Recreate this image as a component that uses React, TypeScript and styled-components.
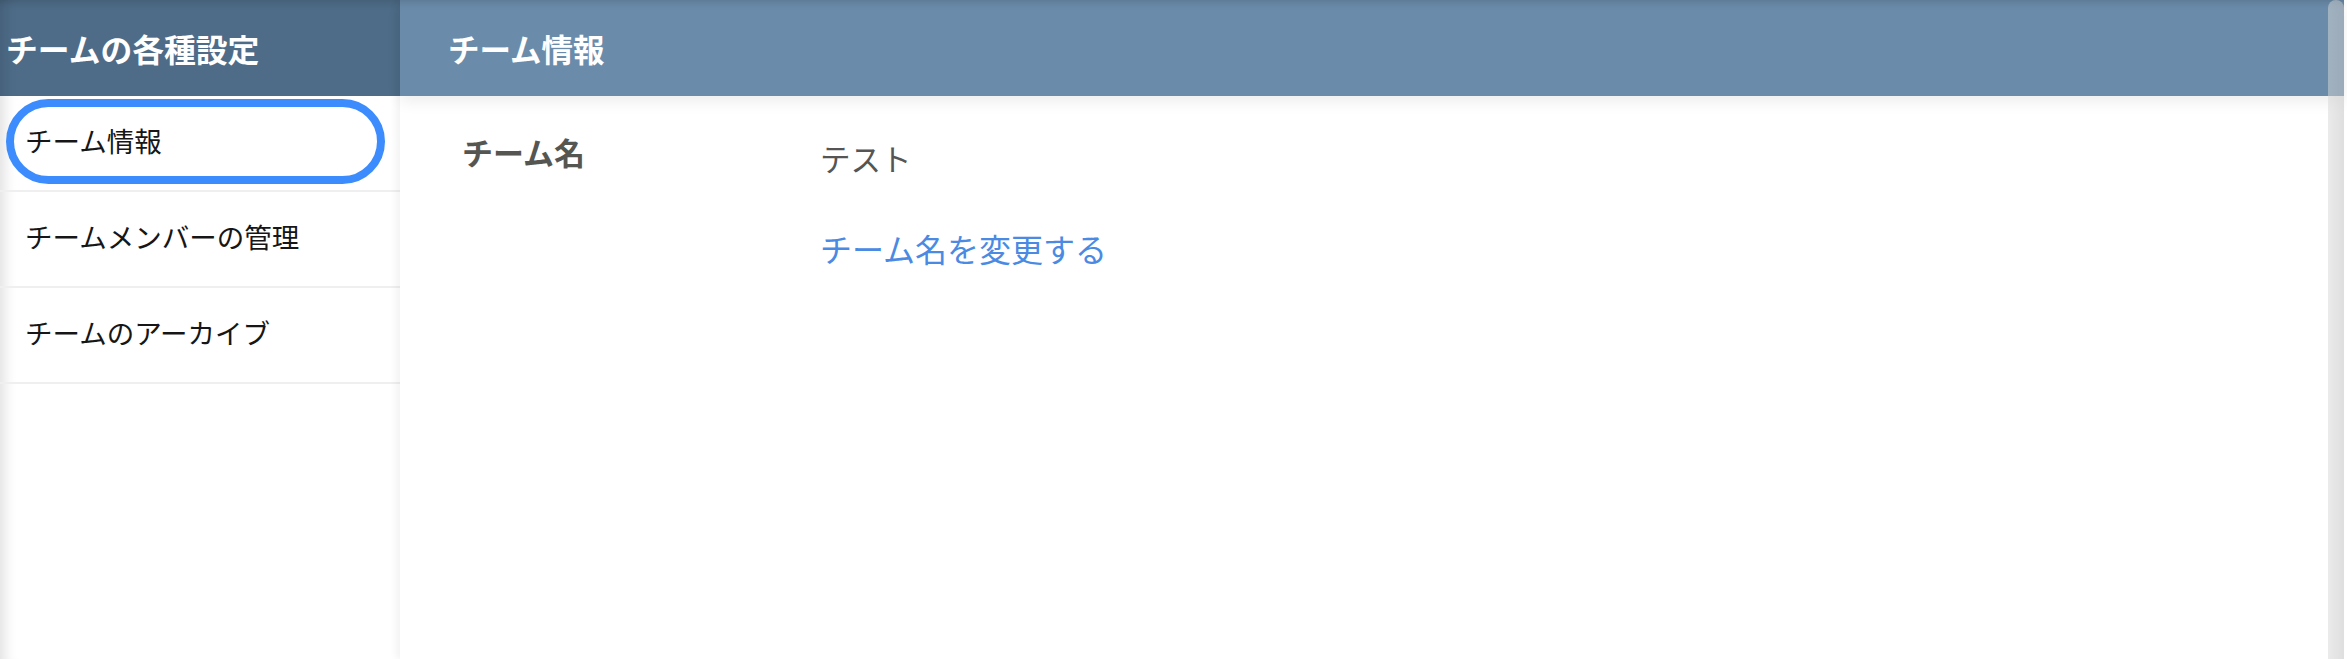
import React from "react";
import styled, { createGlobalStyle } from "styled-components";

const GlobalStyle = createGlobalStyle`
  html, body {
    margin: 0;
    padding: 0;
    background: #ffffff;
  }
  body {
    font-family: "Noto Sans CJK JP", "Noto Sans", sans-serif;
    -webkit-font-smoothing: antialiased;
  }
  * { box-sizing: border-box; }
`;

const Page = styled.div`
  position: relative;
  display: flex;
  height: 659px;
  padding-right: 3px;
  background: #ffffff;
  overflow: hidden;
`;

const Sidebar = styled.aside`
  width: 400px;
  flex: none;
  display: flex;
  flex-direction: column;
  background: #ffffff;
  box-shadow: inset 16px 0 14px -12px rgba(0, 0, 0, 0.13);
`;

const SidebarHeader = styled.div`
  height: 96px;
  flex: none;
  display: flex;
  align-items: center;
  padding-left: 6px;
  background: #4e6c88;
  color: #ffffff;
  font-size: 31.8px;
  font-weight: 700;
  box-shadow: inset 0 10px 8px -8px rgba(0, 0, 0, 0.16),
    inset 16px 0 14px -12px rgba(0, 0, 0, 0.13);
`;

const NavList = styled.nav`
  display: flex;
  flex-direction: column;
`;

const NavItem = styled.div<{ $active?: boolean }>`
  position: relative;
  height: 96px;
  display: flex;
  align-items: center;
  padding-left: 25px;
  padding-bottom: 6px;
  border-bottom: 2px solid #efefef;
  color: #161616;
  font-size: 27.5px;
  cursor: pointer;

  ${({ $active }) =>
    $active &&
    `
    &::after {
      content: "";
      position: absolute;
      top: 3px;
      left: 6px;
      right: 15px;
      bottom: 6px;
      border: 8px solid #3d8cfd;
      border-radius: 999px;
      pointer-events: none;
    }
  `}
`;

const Main = styled.main`
  position: relative;
  z-index: 1;
  flex: 1;
  display: flex;
  flex-direction: column;
  background: #ffffff;
  box-shadow: -4px 0 7px rgba(0, 0, 0, 0.05);
`;

const MainHeader = styled.div`
  height: 96px;
  flex: none;
  display: flex;
  align-items: center;
  padding-left: 48px;
  background: #6a8caa;
  color: #ffffff;
  font-size: 31.5px;
  font-weight: 700;
  box-shadow: inset 0 10px 8px -8px rgba(0, 0, 0, 0.16),
    0 6px 14px rgba(0, 0, 0, 0.07);
`;

const Content = styled.section`
  padding: 33px 0 0 62px;
`;

const InfoRow = styled.div`
  display: grid;
  grid-template-columns: 358px 1fr;
`;

const Label = styled.div`
  font-size: 31px;
  font-weight: 700;
  line-height: 45px;
  color: #555652;
`;

const ValueColumn = styled.div`
  display: flex;
  flex-direction: column;
  align-items: flex-start;
  padding-top: 7px;
`;

const Value = styled.div`
  font-size: 30.5px;
  line-height: 45px;
  color: #555555;
`;

const ChangeLink = styled.a`
  margin-top: 45px;
  font-size: 32px;
  line-height: 45px;
  color: #4a8ae3;
  text-decoration: none;
  cursor: pointer;
`;

const ScrollThumb = styled.div`
  position: absolute;
  top: 0;
  bottom: 0;
  right: 3px;
  width: 16px;
  border-radius: 8px 8px 0 0;
  background: linear-gradient(
    to right,
    rgba(214, 214, 214, 0.5),
    rgba(196, 196, 196, 0.55)
  );
  z-index: 5;
`;

const navItems = ["チーム情報", "チームメンバーの管理", "チームのアーカイブ"];

export default function App() {
  return (
    <>
      <GlobalStyle />
      <Page>
        <Sidebar>
          <SidebarHeader>チームの各種設定</SidebarHeader>
          <NavList>
            {navItems.map((item, i) => (
              <NavItem key={item} $active={i === 0}>
                {item}
              </NavItem>
            ))}
          </NavList>
        </Sidebar>
        <Main>
          <MainHeader>チーム情報</MainHeader>
          <Content>
            <InfoRow>
              <Label>チーム名</Label>
              <ValueColumn>
                <Value>テスト</Value>
                <ChangeLink>チーム名を変更する</ChangeLink>
              </ValueColumn>
            </InfoRow>
          </Content>
        </Main>
        <ScrollThumb />
      </Page>
    </>
  );
}
